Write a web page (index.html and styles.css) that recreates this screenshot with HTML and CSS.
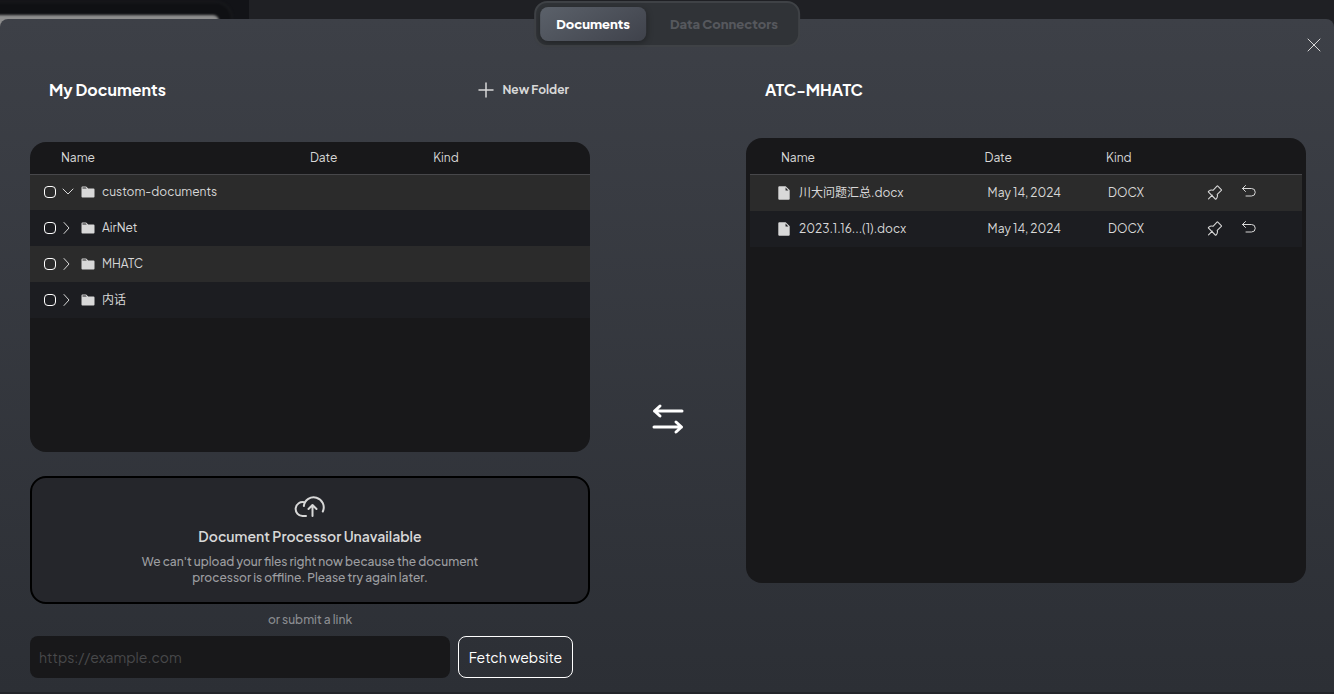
FILE: index.html
```html
<!DOCTYPE html>
<html lang="en">
<head>
<meta charset="utf-8">
<title>Documents</title>
<link rel="stylesheet" href="styles.css">
</head>
<body>
<svg class="sprite" aria-hidden="true">
  <symbol id="folder" viewBox="0 0 256 256"><path fill="currentColor" d="M216 72h-85l-28-28a16 16 0 0 0-11-5H40a16 16 0 0 0-16 16v146a15 15 0 0 0 15 15h178a15 15 0 0 0 15-15V88a16 16 0 0 0-16-16ZM40 56h52l16 16H40Z"/></symbol>
  <symbol id="file" viewBox="20 20 216 216"><path fill="currentColor" d="m214 82-56-56a8 8 0 0 0-6-2H56a16 16 0 0 0-16 16v176a16 16 0 0 0 16 16h144a16 16 0 0 0 16-16V88a8 8 0 0 0-2-6Zm-62 6V44l44 44Z"/></symbol>
  <symbol id="right" viewBox="0 0 14 14"><path d="M3 1.500 8 7l-5 5.500"/></symbol>
  <symbol id="down" viewBox="0 0 14 14"><path d="M2 4 7 9l5-5"/></symbol>
  <symbol id="pin" viewBox="28 28 208 208"><path stroke-width="14" d="m96 160-48 48M214 98l-53 53c5 14 6 34-13 58a8 8 0 0 1-12 1L48 122a8 8 0 0 1 1-12c26-21 49-16 57-13l52-55a8 8 0 0 1 11 0l45 45a8 8 0 0 1 0 11Z"/></symbol>
  <symbol id="undo" viewBox="0 1 16 16"><path d="M4.500 1.500 1.500 4.500l3 3M1.500 4.500h9a3.700 3.700 0 0 1 0 7.500H5"/></symbol>
</svg>
<div class="backdrop" aria-hidden="true"><div class="backdrop-side"><div class="backdrop-bar"></div></div></div>
<main class="modal">
  <nav class="tabs">
    <button class="tab active" type="button">Documents</button>
    <button class="tab" type="button">Data Connectors</button>
  </nav>
  <button class="close" type="button" aria-label="Close"><svg class="stroke" viewBox="0 0 16 16" width="16" height="16"><path d="m2 2 12 12M14 2 2 14"/></svg></button>
  <div class="columns">
    <section>
      <header class="heading">
        <h2>My Documents</h2>
        <button class="new-folder" type="button"><svg class="stroke" viewBox="0 0 16 16" width="16" height="16"><path stroke-width="1.500" d="M8 1v14M1 8h14"/></svg>New Folder</button>
      </header>
      <div class="panel panel-left">
        <table class="files files-left">
          <thead><tr><th class="c-name">Name</th><th class="c-date">Date</th><th>Kind</th></tr></thead>
          <tbody>
            <tr><td colspan="3"><div class="entry"><input type="checkbox" id="f1"><button class="toggle" type="button" aria-label="Collapse"><svg class="stroke" width="14" height="14"><use href="#down"/></svg></button><svg width="16" height="16"><use href="#folder"/></svg><label for="f1">custom-documents</label></div></td></tr>
            <tr><td colspan="3"><div class="entry"><input type="checkbox" id="f2"><button class="toggle" type="button" aria-label="Expand"><svg class="stroke" width="14" height="14"><use href="#right"/></svg></button><svg width="16" height="16"><use href="#folder"/></svg><label for="f2">AirNet</label></div></td></tr>
            <tr><td colspan="3"><div class="entry"><input type="checkbox" id="f3"><button class="toggle" type="button" aria-label="Expand"><svg class="stroke" width="14" height="14"><use href="#right"/></svg></button><svg width="16" height="16"><use href="#folder"/></svg><label for="f3">MHATC</label></div></td></tr>
            <tr><td colspan="3"><div class="entry"><input type="checkbox" id="f4"><button class="toggle" type="button" aria-label="Expand"><svg class="stroke" width="14" height="14"><use href="#right"/></svg></button><svg width="16" height="16"><use href="#folder"/></svg><label for="f4">内话</label></div></td></tr>
          </tbody>
        </table>
      </div>
      <div class="upload">
        <svg class="cloud" viewBox="0 0 32 26" width="32" height="26"><path d="M12 23H8.500a7 7 0 1 1 1.800-13.800M9.800 13a10 10 0 1 1 19 5.500M18.500 23V12.500M14.500 16l4-4 4 4"/></svg>
        <h3>Document Processor Unavailable</h3>
        <p>We can't upload your files right now because the document processor is offline. Please try again later.</p>
      </div>
      <label class="or" for="link">or submit a link</label>
      <form class="fetch">
        <input id="link" type="url" placeholder="https://example.com">
        <button type="button">Fetch website</button>
      </form>
    </section>
    <div class="swap"><svg viewBox="0 0 32 32" width="32" height="32"><path d="M30 8H2.500M8 3 2.500 8 8 13M2 24h27.500M24 19l5.500 5-5.500 5"/></svg></div>
    <section>
      <header class="heading heading-right"><h2>ATC-MHATC</h2></header>
      <div class="panel panel-right">
        <table class="files files-right">
          <thead><tr><th class="c-name">Name</th><th class="c-date">Date</th><th class="c-kind">Kind</th><th></th></tr></thead>
          <tbody>
            <tr><td><div class="doc"><svg width="14" height="16"><use href="#file"/></svg>川大问题汇总.docx</div></td><td class="date">May 14, 2024</td><td class="kind">DOCX</td><td><div class="actions"><button type="button" aria-label="Pin"><svg class="stroke" width="16" height="16"><use href="#pin"/></svg></button><button type="button" aria-label="Remove"><svg class="stroke" width="16" height="16"><use href="#undo"/></svg></button></div></td></tr>
            <tr><td><div class="doc"><svg width="14" height="16"><use href="#file"/></svg>2023.1.16...(1).docx</div></td><td class="date">May 14, 2024</td><td class="kind">DOCX</td><td><div class="actions"><button type="button" aria-label="Pin"><svg class="stroke" width="16" height="16"><use href="#pin"/></svg></button><button type="button" aria-label="Remove"><svg class="stroke" width="16" height="16"><use href="#undo"/></svg></button></div></td></tr>
          </tbody>
        </table>
      </div>
    </section>
  </div>
</main>
</body>
</html>
```

FILE: styles.css
```css
* { box-sizing: border-box; }
body {
  margin: 0;
  min-height: 100vh;
  padding-top: 19px;
  display: flex;
  background: #1f2024;
  color: #d8d8d8;
  font: 12px/16px "Plus Jakarta Sans", Inter, "Noto Sans CJK SC", sans-serif;
  overflow: hidden;
}
button, input { font: inherit; color: inherit; margin: 0; }
button { background: none; border: 0; padding: 0; cursor: pointer; }
h2, h3, p { margin: 0; }
svg { display: block; flex: none; }
.sprite { position: absolute; width: 0; height: 0; }
.stroke { fill: none; stroke: currentColor; stroke-linecap: round; stroke-linejoin: round; }

.backdrop { position: absolute; inset: 0 0 auto; height: 40px; overflow: hidden; }
.backdrop-side { width: 249px; height: 40px; background: #121317; }
.backdrop-bar {
  position: absolute;
  top: 15px;
  left: -20px;
  width: 239px;
  height: 30px;
  border-radius: 6px;
  background: #8d8d8d;
  box-shadow: 0 0 0 12px #0f1013, 0 0 0 14px #17181b;
  filter: blur(1px);
}

.modal {
  position: relative;
  flex: 1;
  padding: 58px 28px 13px 30px;
  border-bottom: 2px solid #222429;
  border-radius: 8px 8px 0 0;
  background: linear-gradient(180deg, #3d4047, #2c2f35);
}
.tabs {
  position: absolute;
  top: -18px;
  left: 50%;
  transform: translateX(-50%);
  display: flex;
  gap: 8px;
  padding: 4px;
  border: 2px solid #3f4246;
  border-radius: 13px;
  background: #303337;
}
.tab {
  padding: 8px 16px;
  border-radius: 8px;
  font-size: 13px;
  line-height: 18px;
  font-weight: 800;
  white-space: nowrap;
  color: #56585d;
}
.tab.active {
  color: #fff;
  background: linear-gradient(150deg, #5b616a, #3f424b);
  box-shadow: 0 2px 6px rgba(0, 0, 0, .3);
}
.close { position: absolute; top: 18px; right: 12px; }

.columns { display: grid; grid-template-columns: minmax(0, 560fr) minmax(0, 156fr) minmax(0, 560fr); }
.heading { display: flex; align-items: center; justify-content: space-between; padding: 0 21px 0 19px; height: 26px; margin-bottom: 39px; }
.heading-right { margin-bottom: 35px; }
h2 { font-size: 16px; line-height: 24px; font-weight: 700; color: #fff; }
.new-folder { display: flex; align-items: center; gap: 8px; font-weight: 700; }

.panel { background: #18181a; border-radius: 16px; overflow: hidden; }
.panel-left { height: 310px; }
.panel-right { height: 445px; padding: 4px; }
.files { width: 100%; border-collapse: collapse; table-layout: fixed; }
.files th { height: 32px; padding: 0; text-align: left; font-weight: 400; border-bottom: 1px solid #47474a; }
.files td { height: 36px; padding: 0; }
.files tbody tr:nth-child(odd) { background: #2b2b2b; }
.files tbody tr:nth-child(even) { background: #1c1d21; }
.files-left .c-name { width: 50%; padding-left: 31px; }
.files-left .c-date { width: 22%; }
.entry { display: flex; align-items: center; padding-left: 14px; }
.entry label { margin-left: 6px; }
.entry input { appearance: none; width: 12px; height: 12px; border: 1px solid #fff; border-radius: 4px; }
.toggle { margin: 0 5px; }
.files-right .c-name { width: 42.5%; padding-left: 31px; }
.files-right .c-date { width: 22%; }
.files-right .c-kind { width: 18%; }
.files-right tbody tr:first-child td { height: 37px; }
.doc { display: flex; align-items: center; gap: 8px; padding-left: 27px; }
.files-right .date { padding-left: 3px; }
.files-right .kind { padding-left: 2px; }
.actions { display: flex; gap: 18px; padding-left: 2px; }

.upload {
  display: flex;
  flex-direction: column;
  align-items: center;
  height: 128px;
  margin-top: 24px;
  padding-top: 15px;
  border: 2px solid #000;
  border-radius: 16px;
  background: #25262b;
  text-align: center;
}
.cloud { fill: none; stroke: #d8d8d8; stroke-width: 2; stroke-linecap: round; stroke-linejoin: round; }
h3 { margin-top: 7px; font-size: 14px; line-height: 20px; font-weight: 600; }
.upload p { width: 352px; margin-top: 8px; font-weight: 500; color: #9d9ea1; }
.or { display: block; margin: 8px 0; text-align: center; font-weight: 500; color: #8b8d91; }
.fetch { display: flex; gap: 8px; padding-right: 17px; }
.fetch input { flex: 1; min-width: 0; height: 42px; padding: 0 9px; border: 0; border-radius: 8px; background: #18181a; font-size: 14px; }
.fetch input::placeholder { color: #48494b; opacity: 1; }
.fetch button { width: 115px; height: 42px; border: 1px solid #fff; border-radius: 8px; font-size: 14px; color: #fff; white-space: nowrap; }
.swap { display: flex; justify-content: center; padding-top: 326px; }
.swap svg { fill: none; stroke: #fff; stroke-width: 3; stroke-linecap: round; stroke-linejoin: round; }
```
